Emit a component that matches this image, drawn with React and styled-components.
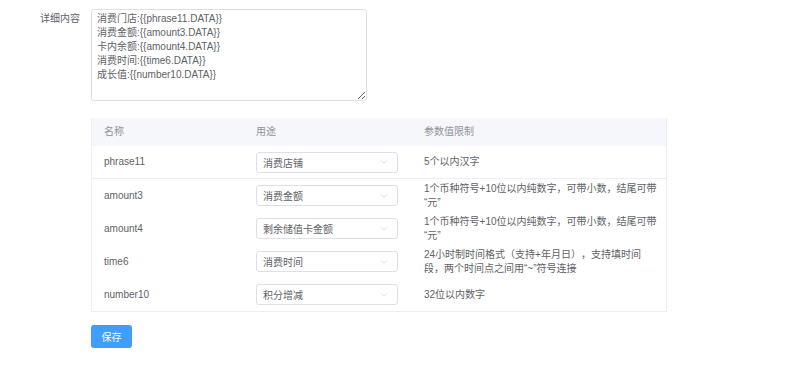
import styled, { createGlobalStyle } from "styled-components";
import { ChevronDown } from "lucide-react";

const GlobalStyle = createGlobalStyle`
  body {
    margin: 0;
    background: #fff;
    font-family: "Liberation Sans", "Noto Sans CJK SC", sans-serif;
    color: #606266;
  }
`;

const Page = styled.div`
  padding: 9px 0 0 0;
  width: 800px;
  height: 370px;
  box-sizing: border-box;
`;

const FormRow = styled.div`
  display: flex;
  align-items: flex-start;
`;

const Label = styled.label`
  width: 91px;
  box-sizing: border-box;
  padding-right: 11px;
  text-align: right;
  font-size: 10px;
  line-height: 20px;
  color: #606266;
`;

const TextArea = styled.textarea`
  width: 276px;
  height: 92px;
  box-sizing: border-box;
  border: 1px solid #dcdfe6;
  border-radius: 3px;
  padding: 2px 5px;
  font-family: inherit;
  font-size: 10px;
  line-height: 14px;
  color: #606266;
  outline: none;
`;

const Indent = styled.div`
  margin-left: 91px;
`;

const Table = styled.div`
  margin-top: 17px;
  width: 574px;
  border: 1px solid #ebeef5;
  border-top: none;
`;

const Row = styled.div`
  display: grid;
  grid-template-columns: 152px 168px 1fr;
  align-items: center;
  height: ${({ $head, $line }) => ($head ? "28px" : $line ? "32px" : "33px")};
  background: ${({ $head }) => ($head ? "#f5f7fa" : "#fff")};
  border-bottom: ${({ $line }) => ($line ? "1px solid #ebeef5" : "none")};
  color: ${({ $head }) => ($head ? "#909399" : "#606266")};
  font-size: 10px;
`;

const Cell = styled.div`
  padding: 0 5.6px 0 12px;
  line-height: 14px;
  text-spacing-trim: space-all;
`;

const Select = styled.div`
  display: flex;
  align-items: center;
  justify-content: space-between;
  width: 142px;
  height: 21px;
  box-sizing: border-box;
  border: 1px solid #dcdfe6;
  border-radius: 3px;
  padding: 0 8px 0 6px;
  color: #606266;
  font-size: 10px;
  svg {
    color: #c0c4cc;
  }
`;

const SelectCell = styled.div`
  padding: 0 12px;
`;

const SaveButton = styled.button`
  margin-top: 13px;
  width: 41px;
  height: 23px;
  border: none;
  border-radius: 3px;
  background: #409eff;
  color: #fff;
  font-family: inherit;
  font-size: 10px;
  padding: 0;
`;

const content = `消费门店:{{phrase11.DATA}}
消费金额:{{amount3.DATA}}
卡内余额:{{amount4.DATA}}
消费时间:{{time6.DATA}}
成长值:{{number10.DATA}}`;

const rows = [
  { name: "phrase11", use: "消费店铺", limit: "5个以内汉字" },
  {
    name: "amount3",
    use: "消费金额",
    limit: "1个币种符号+10位以内纯数字，可带小数，结尾可带\u200B“元”",
  },
  {
    name: "amount4",
    use: "剩余储值卡金额",
    limit: "1个币种符号+10位以内纯数字，可带小数，结尾可带\u200B“元”",
  },
  {
    name: "time6",
    use: "消费时间",
    limit: "24小时制时间格式（支持+年月日），支持填时间段，两个时间点之间用“~”符号连接",
  },
  { name: "number10", use: "积分增减", limit: "32位以内数字" },
];

export default function App() {
  return (
    <Page>
      <GlobalStyle />
      <FormRow>
        <Label>详细内容</Label>
        <TextArea defaultValue={content} />
      </FormRow>
      <Indent>
        <Table>
          <Row $head>
            <Cell>名称</Cell>
            <Cell>用途</Cell>
            <Cell>参数值限制</Cell>
          </Row>
          {rows.map((r, i) => (
            <Row key={r.name} $line={i === 0}>
              <Cell>{r.name}</Cell>
              <SelectCell>
                <Select>
                  <span>{r.use}</span>
                  <ChevronDown size={10} strokeWidth={1.5} />
                </Select>
              </SelectCell>
              <Cell>{r.limit}</Cell>
            </Row>
          ))}
        </Table>
        <SaveButton>保存</SaveButton>
      </Indent>
    </Page>
  );
}
